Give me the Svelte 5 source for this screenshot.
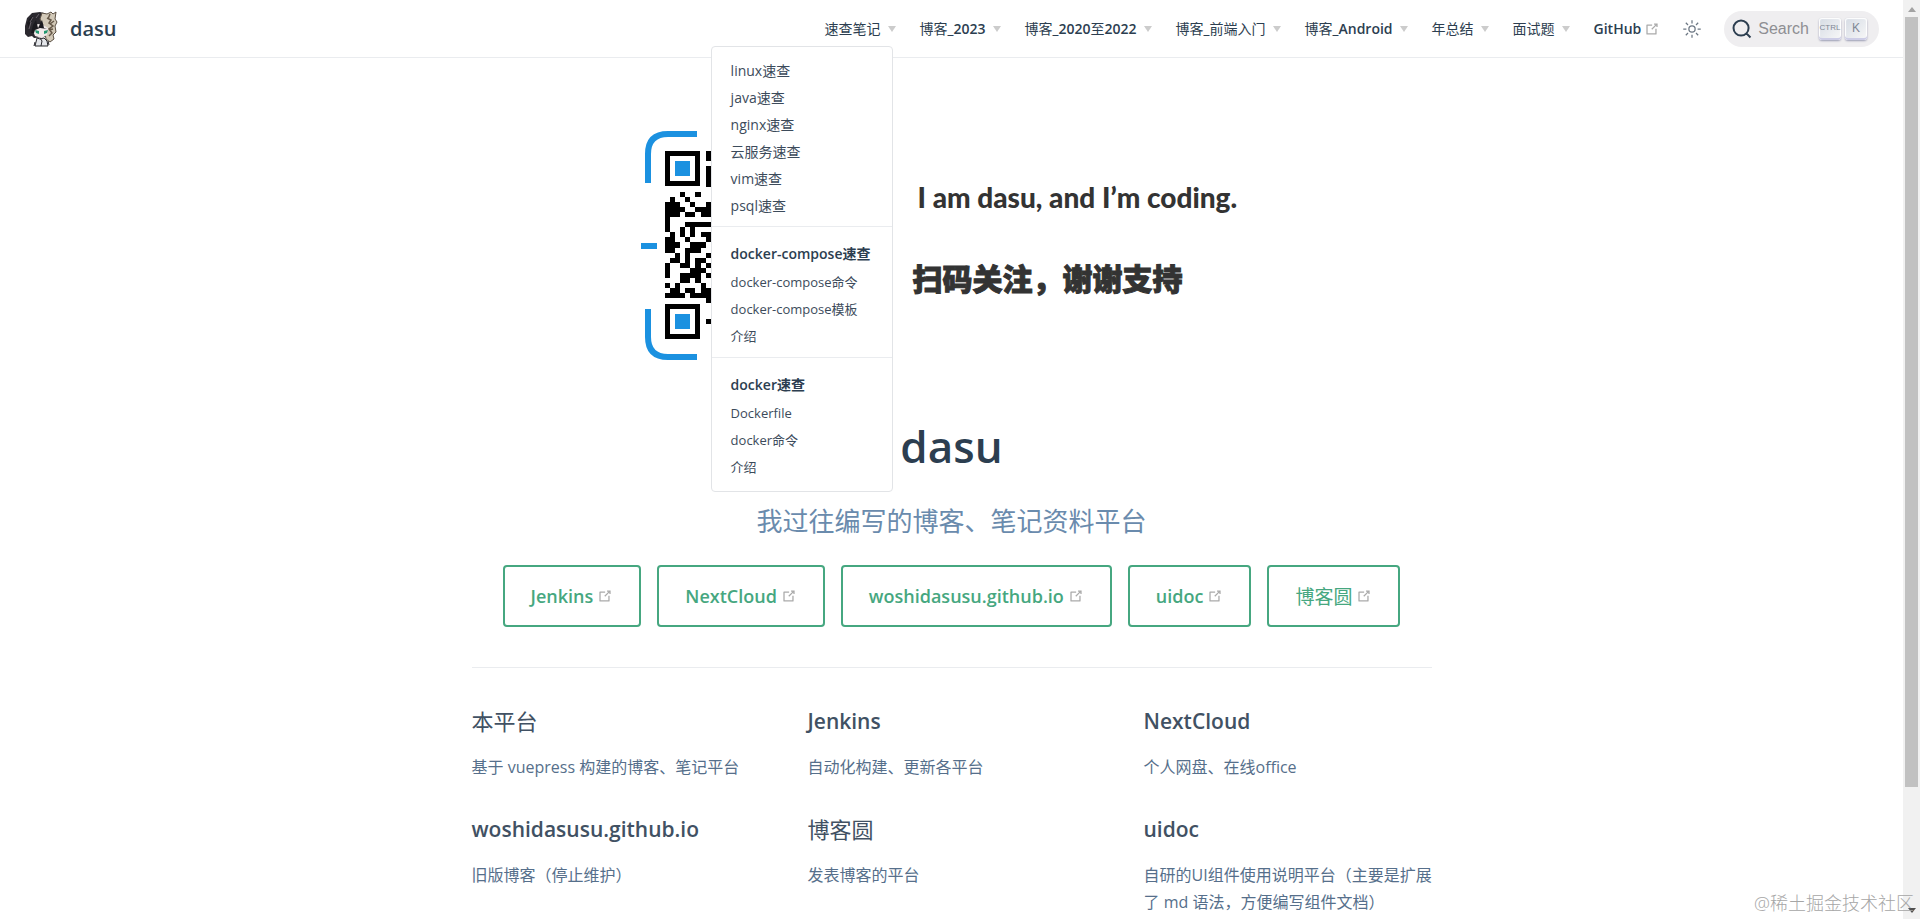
<script>
  const navItems = ['速查笔记', '博客_2023', '博客_2020至2022', '博客_前端入门', '博客_Android', '年总结', '面试题'];
  const quickLinks = ['linux速查', 'java速查', 'nginx速查', '云服务速查', 'vim速查', 'psql速查'];
  const groups = [
    { title: 'docker-compose速查', links: ['docker-compose命令', 'docker-compose模板', '介绍'] },
    { title: 'docker速查', links: ['Dockerfile', 'docker命令', '介绍'] }
  ];
  const actions = ['Jenkins', 'NextCloud', 'woshidasusu.github.io', 'uidoc', '博客圆'];
  const features = [
    { title: '本平台', text: '基于 vuepress 构建的博客、笔记平台' },
    { title: 'Jenkins', text: '自动化构建、更新各平台' },
    { title: 'NextCloud', text: '个人网盘、在线office' },
    { title: 'woshidasusu.github.io', text: '旧版博客（停止维护）' },
    { title: '博客圆', text: '发表博客的平台' },
    { title: 'uidoc', text: '自研的UI组件使用说明平台（主要是扩展了 md 语法，方便编写组件文档）' }
  ];
  // Splits a label into Latin and Chinese runs, which carry different weights.
  const isHan = (text) => /[\u4e00-\u9fff]/.test(text);
  const runs = (text) => text.match(/[\u4e00-\u9fff]+|[^\u4e00-\u9fff]+/g);
  // One string per module row of the code, '#' is a dark module.
  const qrRows = [
    '........#', '........#', '.........', '........#', '........#', '........#', '........#',
    '.........',
    '...#..#..', '.#..#....', '###..#..#', '####..###', '###.##.##', '#........',
    '#...#####', '#..#.#...', '.#.#.#.##', '##..#...#', '###..###.', '##..###..',
    '..#.#...#', '.##.#.##.', '#..##.#.#', '#....###.', '#..####.#', '...##.#..',
    '#.#....#.', '.##.##.##', '####.####', '........#',
    '.........', '.........', '.........', '........#', '.........', '.........', '.........'
  ];
  const modules = qrRows.flatMap((row, y) => [...row].flatMap((c, x) => (c === '#' ? [{ x, y }] : [])));
</script>

{#snippet external()}
  <svg class="external" viewBox="0 0 100 100" aria-hidden="true">
    <path d="M18.8,85.1h56c2.2,0,4-1.8,4-4v-32h-8v28h-48v-48h28v-8h-32c-2.2,0-4,1.8-4,4v56C14.8,83.3,16.6,85.1,18.8,85.1z" />
    <polygon points="45.7,48.7 51.3,54.3 77.2,28.5 77.2,37.2 85.2,37.2 85.2,14.9 62.8,14.9 62.8,22.9 71.5,22.9" />
  </svg>
{/snippet}

<div class="window">
  <div class="page">
    <header>
      <a class="brand" href="#home">
        <svg class="avatar" viewBox="0 0 34 36" aria-hidden="true">
          <path d="M16 1 8 2 3 7 1 15v8l3 3 4-1 2 2 12-1 6-6-3-15-5-3z" fill="#2b292f" />
          <path d="m18 2 5 1 4-2 2 2 3-2-1 7 2 3-2 4 1 6-3 3 1 4-4 3-4-3-2-12-4-8z" fill="#d2c9b8" stroke="#5c5145" />
          <path d="m23 7 4 2-2 3 4 3-4 3 3 4-3 3M26 3l-2 5M30 10l-4 3M29 18l-4 1" fill="none" stroke="#665949" stroke-width="1.500" />
          <path d="m10 15 4-2 5 1 5 3-1 7-5 3-7-2-2-5z" fill="#f1eaea" />
          <path d="m7 22 2-8 3-5 2 8 4-8 2 8 3 1-7-1-5 2-1 3zM3 12l3-5 3-2-4 12z" fill="#1b1a1f" />
          <path d="m6 11 3-5M5 18l2-7M12 7l3-4" stroke="#69636b" />
          <path d="m11 19 4 1v3l-3-1zM20 20l4-1-1 3-3 1z" fill="#23976f" />
          <path d="m13 27 3 1 4-1 3 3 1 5H11z" fill="#e4e6ea" stroke="#292a2f" />
          <path d="m16 27 2 3-1 5M11 31l-1 4M24 30l1 4" fill="none" stroke="#26262c" />
        </svg>
        <span>dasu</span>
      </a>
      <nav>
        {#each navItems as item, i}
          <div class="nav-item">
            <button class="toggle" type="button" aria-expanded={i === 0}>
              <span>{#each runs(item) as run}<span class:latin={!isHan(run)}>{run}</span>{/each}</span>
              <i class="caret"></i>
            </button>
            {#if i === 0}
              <div class="menu">
                <ul>
                  {#each quickLinks as link}<li><a href="#note">{link}</a></li>{/each}
                </ul>
                {#each groups as group}
                  <section>
                    <h4>{group.title}</h4>
                    <ul class="sub">
                      {#each group.links as link}<li><a href="#note">{link}</a></li>{/each}
                    </ul>
                  </section>
                {/each}
              </div>
            {/if}
          </div>
        {/each}
        <a class="github latin" href="#github">GitHub{@render external()}</a>
        <button class="theme" type="button" aria-label="theme">
          <svg viewBox="0 0 32 32" aria-hidden="true">
            <path d="M16 12.005a4 4 0 1 1-4 4a4.005 4.005 0 0 1 4-4m0-2a6 6 0 1 0 6 6a6 6 0 0 0-6-6zM5.394 6.813l1.414-1.415l3.506 3.506L8.9 10.318zM2 15.005h5v2H2zM5.394 25.197L8.9 21.691l1.414 1.415l-3.506 3.505zM15 25.005h2v5h-2zM21.687 23.106l1.414-1.415l3.506 3.506l-1.414 1.414zM25 15.005h5v2h-5zM21.687 8.904l3.506-3.506l1.414 1.415l-3.506 3.505zM15 2.005h2v5h-2z" />
          </svg>
        </button>
        <button class="search" type="button">
          <svg viewBox="0 0 20 20" aria-hidden="true">
            <path d="M14.386 14.386l4.0877 4.0877-4.0877-4.0877c-2.9418 2.9419-7.7115 2.9419-10.6533 0-2.9419-2.9418-2.9419-7.7115 0-10.6533 2.9418-2.9419 7.7115-2.9419 10.6533 0 2.9419 2.9418 2.9419 7.7115 0 10.6533z" />
          </svg>
          <span class="search-label">Search</span>
          <kbd class="ctrl">CTRL</kbd><kbd>K</kbd>
        </button>
      </nav>
    </header>

    <main>
      <div class="banner">
        <svg class="qr" viewBox="0 0 236 230" aria-hidden="true">
          <g fill="none" stroke="#1b91e0" stroke-width="6">
            <path d="M7 52V23Q7 3 27 3H56M7 178v28q0 20 20 20h29M180 3h29q20 0 20 20v29M229 178v28q0 20-20 20h-29" />
            <path d="M0 115h16" />
          </g>
          <g fill="none" stroke="#000" stroke-width="5">
            <path d="M26.500 22.500h30v30h-30zM26.500 175.500h30v30h-30z" />
          </g>
          <path d="M34 30h15v15H34zM34 183h15v15H34z" fill="#1b91e0" />
          <g transform="translate(24 20) scale(5.080)" shape-rendering="crispEdges">
            {#each modules as m}<rect x={m.x} y={m.y} width="1" height="1" />{/each}
          </g>
        </svg>
        <div class="slogan">
          <p class="motto">I am dasu, and I’m coding.</p>
          <p class="thanks">扫码关注，谢谢支持</p>
        </div>
      </div>
      <h1>dasu</h1>
      <p class="description">我过往编写的博客、笔记资料平台</p>
      <div class="actions">
        {#each actions as action}<a class:han={isHan(action)} href="#site">{action}{@render external()}</a>{/each}
      </div>
      <div class="feature-area">
        <div class="features">
          {#each features as feature}
            <section>
              <h2 class:han={isHan(feature.title)}>{feature.title}</h2>
              <p>{feature.text}</p>
            </section>
          {/each}
        </div>
      </div>
    </main>
  </div>
  <div class="scrollbar" aria-hidden="true">
    <i class="up"></i>
    <div class="track"><div class="thumb"></div></div>
    <i class="down"></i>
  </div>
  <div class="watermark">@稀土掘金技术社区</div>
</div>

<style>
  :global(body) { margin: 0; background: #fff; }
  .window {
    position: relative;
    display: grid;
    grid-template-columns: minmax(0, 1fr) 17px;
    height: 100vh;
    overflow: hidden;
    color: #2c3e50;
    font-family: "Open Sans", "Noto Sans CJK SC", sans-serif;
    font-size: 16px;
  }
  .page { min-width: 0; overflow: hidden; }
  a { color: inherit; text-decoration: none; }
  ul, h1, h2, h4, p { margin: 0; padding: 0; list-style: none; }
  button { border: 0; padding: 0; background: none; color: inherit; font: inherit; cursor: pointer; }
  header {
    display: flex;
    align-items: center;
    justify-content: space-between;
    box-sizing: border-box;
    height: 58px;
    padding: 0 24px;
    border-bottom: 1px solid #eaecef;
  }
  .brand { display: flex; align-items: center; gap: 12px; font-size: 20px; font-weight: 600; }
  .avatar { width: 34px; height: 36px; }
  nav { display: flex; align-items: center; gap: 22px; font-size: 14px; white-space: nowrap; }
  .latin { font-weight: 600; }
  .nav-item { position: relative; margin-right: 2px; line-height: 32px; }
  .toggle { display: flex; align-items: center; gap: 7px; }
  .caret { border-left: 4px solid transparent; border-right: 4px solid transparent; border-top: 6px solid #ccc; }
  .menu {
    position: absolute;
    z-index: 2;
    top: 33px;
    right: 3px;
    box-sizing: border-box;
    width: 182px;
    padding: 10px 0;
    border: 1px solid #e2e4e7;
    border-radius: 4px;
    background: #fff;
    color: #3c4b5b;
    line-height: 27px;
  }
  .menu a, h4 { display: block; padding: 0 19px; }
  .menu section { margin-top: 7px; padding-top: 12px; border-top: 1px solid #eaecef; }
  h4 { color: #2c3e50; font-size: 14px; font-weight: 600; line-height: 29px; }
  .sub { padding-top: 1px; font-size: 13px; }
  .external { width: 16px; height: 16px; fill: #aaa; }
  .github { display: flex; align-items: center; gap: 3px; }
  .theme { width: 20px; height: 20px; }
  .theme svg { display: block; width: 20px; height: 20px; fill: #6c7783; }
  .search {
    display: flex;
    align-items: center;
    height: 36px;
    padding: 0 12px 0 8px;
    border-radius: 18px;
    background: #efeef0;
    font: 16px "Liberation Sans", sans-serif;
  }
  .search svg { width: 20px; height: 20px; fill: none; stroke: #2c3e50; stroke-width: 2; }
  .search-label { padding: 0 10px 0 6px; color: #8e8e93; }
  kbd {
    display: grid;
    place-items: center;
    box-sizing: border-box;
    width: 22px;
    height: 22px;
    margin-right: 4px;
    padding-bottom: 2px;
    border-radius: 3px;
    background: linear-gradient(-225deg, #d5dbe4, #f8f8f8);
    box-shadow: inset 0 -2px 0 0 #cdcde6, inset 0 0 1px 1px #fff, 0 1px 2px 0 rgba(30, 35, 90, .4);
    color: #7f8794;
    font: 12px "Liberation Sans", sans-serif;
  }
  .search kbd:last-child { margin-right: 0; }
  .search .ctrl { font-size: 8px; }
  main { box-sizing: border-box; max-width: 960px; margin: 0 auto; padding-top: 73px; text-align: center; }
  .banner { display: flex; gap: 36px; padding-left: 169px; height: 230px; color: #333; text-align: left; white-space: nowrap; }
  .qr { flex: none; width: 236px; height: 230px; }
  .slogan { padding-top: 48px; }
  .motto { padding-left: 5px; font-family: Lato, sans-serif; font-size: 28px; font-weight: 900; line-height: 36px; }
  .thanks { padding-top: 42px; font-size: 30px; font-weight: 900; line-height: 44px; -webkit-text-stroke: 1px #333; }
  h1 { padding-top: 54px; font-size: 44px; font-weight: 600; line-height: 62px; }
  .description { padding-top: 26px; color: #6a8bad; font-size: 26px; line-height: 36px; }
  .actions { display: flex; justify-content: center; gap: 16px; padding-top: 26px; }
  .actions a {
    display: flex;
    align-items: center;
    gap: 4px;
    box-sizing: border-box;
    height: 62px;
    padding: 0 26px;
    border: 2px solid #46a780;
    border-radius: 4px;
    color: #46a780;
    font-size: 18px;
    font-weight: 600;
    white-space: nowrap;
  }
  .actions .han { font-size: 19px; font-weight: 400; }
  .feature-area { margin-top: 40px; border-top: 1px solid #eaecef; }
  .features {
    display: grid;
    grid-template-columns: repeat(3, 1fr);
    gap: 32px 40px;
    margin-right: -8px;
    padding-top: 37px;
    text-align: left;
  }
  h2 { color: #415163; font-size: 21px; font-weight: 600; line-height: 32px; }
  h2.han { font-size: 22px; font-weight: 400; }
  .features p { padding-top: 17px; color: #566f8b; line-height: 27px; }
  .scrollbar { display: flex; flex-direction: column; align-items: center; background: #f1f1f1; }
  .scrollbar i { border-left: 4px solid transparent; border-right: 4px solid transparent; }
  .up { margin: 7px 0 5px; border-bottom: 5px solid #a3a3a3; }
  .down { margin: 6px 0; border-top: 5px solid #505050; }
  .track { flex: 1; width: 13px; }
  .thumb { height: 87%; background: #c1c1c1; }
  .watermark { position: absolute; right: 6px; bottom: 4px; color: #a6a6a6; font-size: 18px; font-weight: 300; line-height: 24px; }
</style>
